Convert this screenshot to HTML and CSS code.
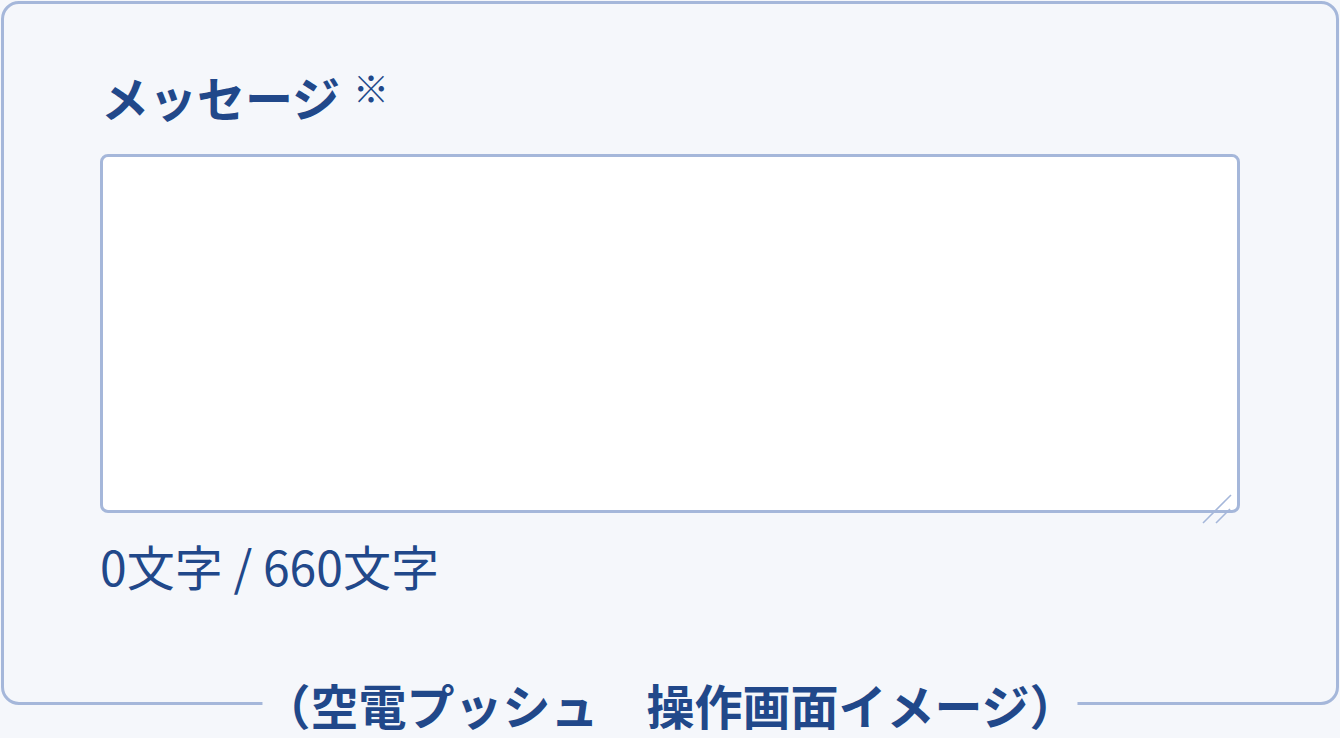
FILE: index.html
```html
<!DOCTYPE html>
<html lang="ja">
<head>
    <meta charset="UTF-8">
    <meta name="viewport" content="width=device-width, initial-scale=1.0">
    <title>メッセージ</title>
    <link rel="stylesheet" href="styles.css">
</head>
<body>

    <div class="frame">
        <label class="field-label" for="message">メッセージ <span class="required">※</span></label>

        <div class="textarea-wrap">
            <textarea id="message" class="message-box" maxlength="660"></textarea>
            <svg class="grip" width="32" height="32" viewBox="0 0 32 32">
                <line x1="2" y1="30" x2="30" y2="2" />
                <line x1="15" y1="30" x2="29" y2="16" />
            </svg>
        </div>

        <p class="counter"><span id="count">0</span>文字 / 660文字</p>

        <div class="caption">（空電プッシュ　操作画面イメージ）</div>
    </div>

</body>
</html>
```

FILE: styles.css
```css
html, body {
    margin: 0;
    background-color: #f5f7fb;
}
body {
    padding-bottom: 32px;
    font-family: "Noto Sans CJK JP", "Noto Sans", sans-serif;
    color: #21488a;
}
.frame {
    position: relative;
    box-sizing: border-box;
    margin: 1px;
    height: 704px;
    padding: 60px 96px 0;
    border: 3px solid #a5b7da;
    border-radius: 18px;
}
.field-label {
    display: block;
    font-size: 48px;
    font-weight: 700;
    line-height: 64px;
    padding-left: 1px;
    margin-bottom: 26px;
}
.required {
    font-size: 36px;
    font-weight: 400;
    line-height: 0;
    margin-left: 2px;
    vertical-align: 14px;
}
.textarea-wrap {
    position: relative;
}
.message-box {
    display: block;
    box-sizing: border-box;
    width: 100%;
    height: 359px;
    border: 3px solid #a5b7da;
    border-radius: 8px;
    background: #fff;
    resize: none;
    outline: none;
}
.grip {
    position: absolute;
    right: 7px;
    bottom: -12px;
    stroke: #a5b7da;
    stroke-width: 1.6;
}
.counter {
    margin: 20px 0 0;
    font-size: 48px;
    line-height: 64px;
}
.caption {
    position: absolute;
    left: 50%;
    bottom: -1.5px;
    transform: translate(-50%, 50%);
    background-color: #f5f7fb;
    font-size: 48px;
    font-weight: 700;
    line-height: 1;
    white-space: nowrap;
}
```
